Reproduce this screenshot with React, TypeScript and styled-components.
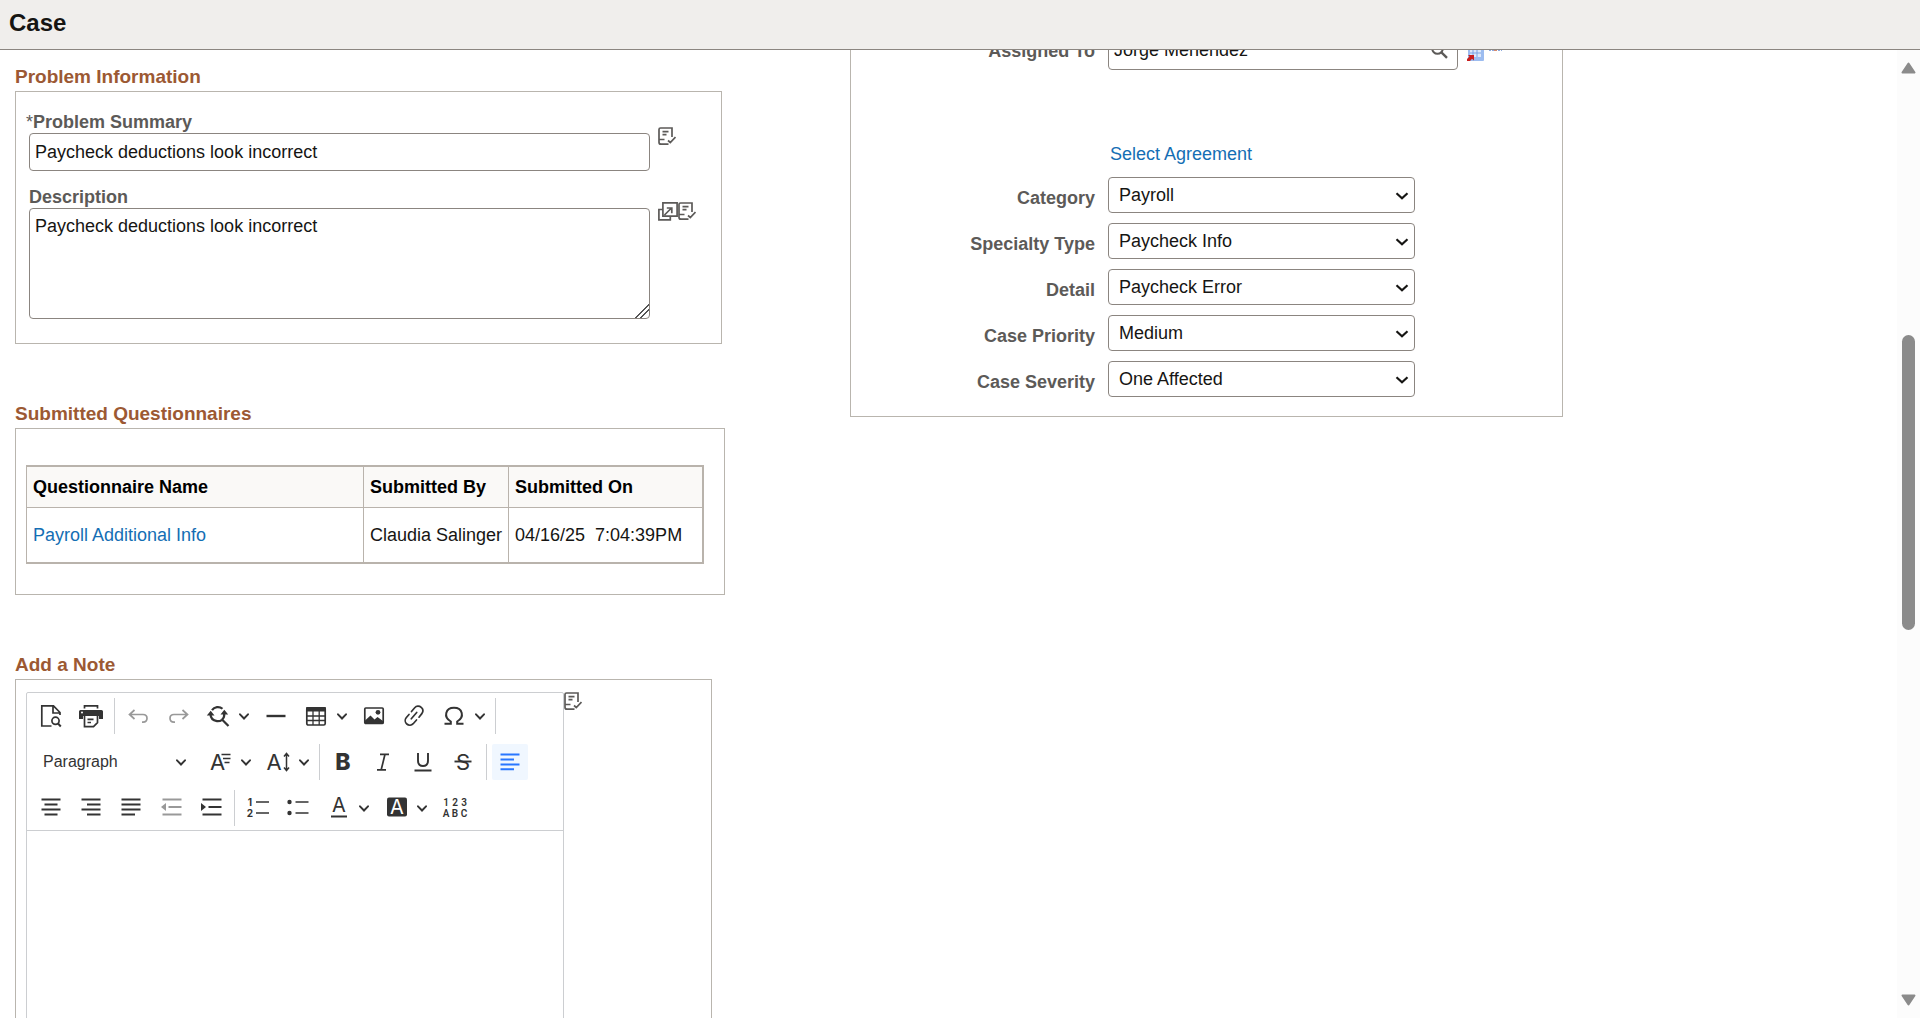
import React from 'react';
import styled, { createGlobalStyle } from 'styled-components';

const GlobalStyle = createGlobalStyle`
  *, *::before, *::after { box-sizing: border-box; }
  body {
    margin: 0;
    background: #fff;
    color: #161513;
    font: 18px/20px "Liberation Sans", Arial, sans-serif;
  }
  input, select, textarea, button { font: inherit; color: inherit; }
  button { cursor: pointer; }
`;

const Page = styled.div`
  display: flex;
  flex-direction: column;
  height: 100vh;
`;

const Header = styled.header`
  flex: none;
  padding: 9px 9px 12px;
  background: #f0eeec;
  border-bottom: 1px solid #8b8580;
`;

const PageTitle = styled.h1`
  margin: 0;
  font-size: 24px;
  line-height: 28px;
`;

const Body = styled.div`
  display: flex;
  flex: 1;
  min-height: 0;
`;

const Main = styled.main`
  display: grid;
  grid-template-columns: minmax(0, 850fr) minmax(0, 1047fr);
  align-items: start;
  flex: 1;
  min-width: 0;
  overflow: hidden;
`;

const LeftColumn = styled.div`
  display: flex;
  flex-direction: column;
  gap: 59px;
  padding: 16px 0 0 15px;
`;

const SectionTitle = styled.h2`
  margin: 0 0 3px;
  color: #9c5933;
  font-size: 19px;
  line-height: 22px;
`;

const Panel = styled.div<{ $width: number; $padding: string }>`
  max-width: ${(p) => p.$width}px;
  padding: ${(p) => p.$padding};
  border: 1px solid #b9b5ae;
`;

const FieldLine = styled.div`
  display: flex;
  gap: 8px;
  & + & { margin-top: 16px; }
`;

const Field = styled.div`
  flex: 1;
  max-width: 621px;
`;

const FieldLabel = styled.label`
  display: block;
  color: #5c5a58;
  font-weight: 700;
  line-height: 21px;
`;

const Required = styled.span`
  margin-left: -3px;
  font-weight: 400;
`;

const FieldIcons = styled.div`
  display: flex;
  align-items: flex-start;
  padding-top: 15px;
`;

const IconButton = styled.button`
  display: block;
  padding: 0;
  border: 0;
  background: none;
  color: #5c5a58;
  svg { display: block; }
`;

const TextBox = styled.input`
  display: block;
  width: 100%;
  height: 38px;
  padding: 0 5px;
  border: 1px solid #8b8580;
  border-radius: 4px;
  background: #fff;
`;

const TextArea = styled.textarea`
  display: block;
  width: 100%;
  height: 111px;
  padding: 7px 5px;
  border: 1px solid #8b8580;
  border-radius: 4px;
  background: #fff;
  &::-webkit-resizer {
    background: linear-gradient(
      135deg,
      transparent 51%, #555 51% 57%, transparent 57% 69%, #555 69% 75%, transparent 75%
    );
  }
`;

const TextLink = styled.a`
  color: #146eb4;
  text-decoration: none;
`;

const Table = styled.table`
  width: 100%;
  max-width: 678px;
  border: 2px solid #b9b3ac;
  border-left-width: 1px;
  border-spacing: 0;
  table-layout: fixed;
`;

const HeadCell = styled.th<{ $width?: number }>`
  width: ${(p) => (p.$width ? `${p.$width}px` : 'auto')};
  height: 41px;
  padding: 0 6px;
  border-bottom: 1px solid #b9b3ac;
  background: #faf9f7;
  color: #000;
  text-align: left;
  & + & { border-left: 1px solid #b9b3ac; }
`;

const Cell = styled.td`
  height: 54px;
  padding: 0 6px;
  white-space: pre;
  & + & { border-left: 1px solid #b9b3ac; }
`;

const EditorLine = styled.div`
  display: flex;
  align-items: flex-start;
`;

const Editor = styled.div`
  flex: 1;
  max-width: 538px;
  border: 1px solid #ccced1;
  border-radius: 2px;
`;

const Toolbar = styled.div`
  display: flex;
  flex-direction: column;
  gap: 10px;
  padding: 5px 6px 4px;
  border-bottom: 1px solid #ccced1;
`;

const ToolRow = styled.div`
  display: flex;
  gap: 4px;
`;

const Tool = styled.button<{ $active?: boolean; $split?: boolean }>`
  display: flex;
  align-items: center;
  width: ${(p) => (p.$split ? 54 : 36)}px;
  height: 36px;
  padding: 0 6px;
  border: 0;
  border-radius: 2px;
  background: ${(p) => (p.$active ? '#f0f7ff' : 'transparent')};
  color: ${(p) => (p.$active ? '#2977ff' : '#333')};
  gap: 9px;
  &:disabled { color: #999; cursor: default; }
  svg { flex: none; }
`;

const ParagraphTool = styled.button`
  display: flex;
  align-items: center;
  justify-content: space-between;
  width: 165px;
  height: 36px;
  padding: 0 12px 0 10px;
  border: 0;
  background: none;
  color: #333;
  font-size: 16px;
`;

const Separator = styled.span`
  width: 1px;
  height: 36px;
  margin: 0 1px;
  background: #ccced1;
`;

const EditorBody = styled.textarea`
  display: block;
  width: 100%;
  height: 320px;
  padding: 12px;
  border: 0;
  outline: 0;
  resize: none;
  background: #fff;
`;

const AssignPanel = styled.div`
  display: grid;
  gap: 10px;
  max-width: 713px;
  margin-top: -30px;
  padding: 11px 0 19px;
  border: 1px solid #b9b5ae;
`;

const AssignRow = styled.div`
  display: grid;
  grid-template-columns: 244px minmax(0, 1fr);
  column-gap: 13px;
  align-items: center;
`;

const AssignLabel = styled.label<{ $drop?: boolean }>`
  padding-top: ${(p) => (p.$drop ? 6 : 0)}px;
  color: #5c5a58;
  font-weight: 700;
  text-align: right;
`;

const LookupLine = styled.div`
  display: flex;
  align-items: center;
  gap: 9px;
`;

const Lookup = styled.div`
  display: flex;
  align-items: center;
  width: 350px;
  height: 38px;
  padding: 0 9px 2px 5px;
  border: 1px solid #8b8580;
  border-radius: 4px;
`;

const LookupInput = styled.input`
  flex: 1;
  min-width: 0;
  padding: 0;
  border: 0;
  outline: 0;
  background: none;
`;

const AssignIcons = styled.div`
  display: flex;
  align-items: center;
  gap: 4px;
`;

const AgreementLine = styled.div`
  padding: 64px 0 3px 259px;
`;

const SelectBox = styled.div`
  position: relative;
  max-width: 307px;
  svg {
    position: absolute;
    top: 13px;
    right: 6px;
    pointer-events: none;
  }
`;

const Select = styled.select`
  display: block;
  width: 100%;
  height: 36px;
  padding: 0 24px 0 10px;
  border: 1px solid #8b8580;
  border-radius: 4px;
  background: #fff;
  appearance: none;
`;

const ScrollTrack = styled.div`
  display: flex;
  flex-direction: column;
  align-items: center;
  width: 23px;
  padding: 12px 0;
  background: #fcfcfc;
  color: #8b8b8b;
`;

const ScrollSpace = styled.div<{ $grow: number }>`
  flex: ${(p) => p.$grow} 0 0;
`;

const ScrollThumb = styled.div`
  flex: 295 0 0;
  width: 13px;
  border-radius: 7px;
  background: #8b8b8b;
`;

/* Icons */

const NoteCheck = () => (
  <svg width="18" height="19" viewBox="0 0 18 19" fill="none" stroke="currentColor" strokeWidth="1.7">
    <path d="M1 12.500V2.500Q1 1 2.500 1H14v9M1 12.500H6.500M1 12.500v2.700q0 2 2 2H10.500M4.500 4.600h6M4.500 7.600h4M10 13.500l2.300 2L17.500 10" />
  </svg>
);

const PopOut = () => (
  <svg width="20" height="19" viewBox="0 0 20 19" fill="none" stroke="currentColor" strokeWidth="1.7">
    <path d="M4.500 7.500H.9v10.400h11.400V14.500M4.900.9h14.200v13.200H4.900zM6.500 13L13.500 6M8.800 6h5v5.200" />
  </svg>
);

const Magnifier = () => (
  <svg width="17" height="17" viewBox="0 0 17 17" fill="none" stroke="currentColor" strokeWidth="2">
    <circle cx="6.500" cy="6.500" r="5.300" />
    <path d="M10.400 10.400L16 15.800" strokeWidth="2.400" />
  </svg>
);

const GridArrow = () => (
  <svg width="17" height="20" viewBox="0 0 17 20">
    <rect x="1" y="1" width="16" height="19" rx="1" fill="#9cbcf0" />
    <rect x="3" y="2" width="11" height="14" fill="#dbe8fb" />
    <path d="M3 5h11M3 8.500h11M3 12h11M6 2v14M10 2v14" stroke="#7ba3e4" />
    <path d="M0 20v-2l2.500-2.500L1 14h6v5.500L5 17.800 3 20z" fill="#c81e1e" />
  </svg>
);

const PeopleStrip = () => (
  <svg width="15" height="20" viewBox="0 0 15 20">
    <circle cx="4" cy="2.500" r="2" fill="#dba273" />
    <circle cx="11" cy="2.500" r="2" fill="#dba273" />
    <path d="M1 8.500V5.500h6v3M8 8.500V5.500h6v3" fill="#a9c3ee" />
    <path d="M1 9.500h13" stroke="#8fabdf" strokeDasharray="2 1" />
    <path d="M6 9.500h3" stroke="#d58a70" />
  </svg>
);

const Chevron = () => (
  <svg width="10" height="10" viewBox="0 0 10 10" fill="none" stroke="currentColor" strokeWidth="1.900" strokeLinecap="round">
    <path d="M1 3.300L5 7.500 9 3.300" />
  </svg>
);

const SelectArrow = () => (
  <svg width="14" height="12" viewBox="0 0 14 12" fill="none" stroke="currentColor" strokeWidth="2.200">
    <path d="M1.500 3.300L7 8.300l5.500-5" />
  </svg>
);

const GlyphBox = styled.svg`
  overflow: visible;
`;

const Glyph = ({ children }: { children: React.ReactNode }) => (
  <GlyphBox width="24" height="24" viewBox="0 0 24 24" fill="none" stroke="currentColor" strokeWidth="1.7">
    {children}
  </GlyphBox>
);

const Letter = ({
  x = 12, y, size, weight = 400, family = 'Inter, sans-serif', fill = 'currentColor', children,
}: {
  x?: number; y: number; size: number; weight?: number; family?: string; fill?: string; children: string;
}) => (
  <text
    x={x}
    y={y}
    fill={fill}
    stroke="none"
    textAnchor="middle"
    fontFamily={family}
    fontSize={size}
    fontWeight={weight}
  >
    {children}
  </text>
);

const icons: Record<string, React.ReactNode> = {
  preview: (
    <Glyph>
      <path d="M12.500 22H2.800V1.900H14.500L21 8.500v2.500M14 2v7h7" />
      <circle cx="16.500" cy="16.800" r="3.600" />
      <path d="M19 19.500l2.800 3" strokeWidth="2" />
    </Glyph>
  ),
  print: (
    <Glyph>
      <path d="M5.500 4.500V1.800h13v2.700" />
      <path fill="currentColor" stroke="none" d="M1.500 6h21q1.500 0 1.500 1.500V15h-4v-3H4v3H0V7.500Q0 6 1.500 6z" />
      <circle cx="3" cy="8.500" r="1" fill="#fff" stroke="none" />
      <path d="M5.500 12v10.700h9l4-4V12M8.500 15.300h6M8.500 18.500h3.500" />
    </Glyph>
  ),
  undo: (
    <Glyph>
      <path d="M8.500 6L3.500 10.500 8.500 15M3.500 10.500H17q4 0 4 3.800T17 18.200h-1" />
    </Glyph>
  ),
  redo: (
    <Glyph>
      <path d="M16.500 6L21.500 10.500 16.500 15M21.500 10.500H8q-4 0-4 3.800T8 18.200h1" />
    </Glyph>
  ),
  find: (
    <Glyph>
      <path strokeWidth="2.200" d="M6 6.200A7 7 0 0 1 16.500 4.800M4.500 10q0 6 6.500 7.200 3 .2 5-1.400 2.600-2.600 2.200-6M16 15.500l6.500 6.500" />
      <path fill="currentColor" stroke="none" d="M.800 11.500h7.700L4.700 6.800zM14.500 10.500h7.700L18.300 5.800z" />
    </Glyph>
  ),
  rule: (
    <Glyph>
      <path d="M2.500 12h19" strokeWidth="2.400" />
    </Glyph>
  ),
  table: (
    <Glyph>
      <rect x="2.800" y="3.800" width="18.400" height="17.200" rx="1.500" />
      <path fill="currentColor" stroke="none" d="M2 4q0-1 1-1h18q1 0 1 1v3.500H2z" />
      <path strokeWidth="1.300" d="M3 12h18M3 16.500h18M9 7v14M15.200 7v14" />
    </Glyph>
  ),
  image: (
    <Glyph>
      <rect x="2.800" y="4" width="18.400" height="15.500" rx="1" />
      <circle cx="16" cy="8.300" r="2.400" fill="currentColor" stroke="none" />
      <path fill="currentColor" stroke="none" d="M3 20v-3.500l5.500-5 4 4 3-2.500 5.500 4V20z" />
    </Glyph>
  ),
  link: (
    <Glyph>
      <path strokeLinecap="round" d="M9.500 7.500l3.200-3.800a4.600 4.600 0 0 1 6.500-.3 4.600 4.600 0 0 1 .8 6L17 13.200M7 10.500l-2.800 3.200a4.600 4.600 0 0 0 .6 6.300 4.600 4.600 0 0 0 6.400-.3L14.500 16M9.300 14.800l5.400-6.300" />
    </Glyph>
  ),
  omega: (
    <Glyph>
      <path strokeWidth="2" d="M2.500 19.700h6.300v-2.200C1 13 3.500 3.800 12 3.800S23 13 15.200 17.500v2.200h6.300" />
    </Glyph>
  ),
  size: (
    <Glyph>
      <Letter x={9.5} y={20} size={22}>A</Letter>
      <path strokeWidth="1.500" d="M13.500 4.500h9M15 8.500h7.500M16.500 12.500h5" />
    </Glyph>
  ),
  height: (
    <Glyph>
      <Letter x={8} y={20} size={22}>A</Letter>
      <path strokeWidth="1.500" d="M20.500 4v16M18 6.500l2.500-3 2.500 3M18 17.500l2.500 3 2.500-3" />
    </Glyph>
  ),
  bold: <Glyph><Letter y={20} size={23} weight={800}>B</Letter></Glyph>,
  italic: (
    <Glyph>
      <path d="M9 4.300h9M6 19.800h9M14 4.300L10.200 19.800" />
    </Glyph>
  ),
  underline: (
    <Glyph>
      <path strokeWidth="1.900" d="M7 3v7.500q0 5.500 5 5.500t5-5.500V3M3.500 20.500h17" />
    </Glyph>
  ),
  strike: (
    <Glyph>
      <Letter y={20} size={22}>S</Letter>
      <path strokeWidth="1.900" d="M3.500 11.500h17" />
    </Glyph>
  ),
  left: <Glyph><path strokeWidth="2" d="M2.500 4.500h19M2.500 9.500h13.500M2.500 14.500h19M2.500 19.200h13.500" /></Glyph>,
  center: <Glyph><path strokeWidth="2" d="M2.500 3.500h19M5.500 8.500h13M2.500 13.500h19M5.500 18.500h13" /></Glyph>,
  right: <Glyph><path strokeWidth="2" d="M2.500 3.500h19M8 8.500h13.500M2.500 13.500h19M8 18.500h13.500" /></Glyph>,
  justify: <Glyph><path strokeWidth="2" d="M2.500 3.500h19M2.500 8.500h19M2.500 13.500h19M2.500 18.500h13.500" /></Glyph>,
  outdent: (
    <Glyph>
      <path strokeWidth="2" d="M3.500 3.500h19M9.500 11h13M3.500 18.500h19" />
      <path fill="currentColor" stroke="none" d="M2 11l5-4v8z" />
    </Glyph>
  ),
  indent: (
    <Glyph>
      <path strokeWidth="2" d="M3.500 3.500h19M9.500 11h13M3.500 18.500h19" />
      <path fill="currentColor" stroke="none" d="M7 11L2 7v8z" />
    </Glyph>
  ),
  numbered: (
    <Glyph>
      <Letter x={4} y={9.5} size={10} weight={700}>1</Letter>
      <Letter x={4} y={21} size={10} weight={700}>2</Letter>
      <path d="M10 6h13M10 17h13" />
    </Glyph>
  ),
  bulleted: (
    <Glyph>
      <circle cx="3.500" cy="6" r="2.200" fill="currentColor" stroke="none" />
      <circle cx="3.500" cy="17" r="2.200" fill="currentColor" stroke="none" />
      <path d="M9.500 6h13M9.500 17h13" />
    </Glyph>
  ),
  color: (
    <Glyph>
      <Letter x={13} y={16} size={20}>A</Letter>
      <path strokeWidth="2" d="M5 20.500h16" />
    </Glyph>
  ),
  highlight: (
    <Glyph>
      <rect x="3" y="1.500" width="20" height="19" rx="2" fill="currentColor" stroke="none" />
      <Letter x={13} y={18} size={20} fill="#fff">A</Letter>
    </Glyph>
  ),
  transform: (
    <Glyph>
      <Letter x={4} y={9.500} size={10} weight={600} family="Roboto, sans-serif">1</Letter>
      <Letter x={13} y={9.500} size={10} weight={600} family="Roboto, sans-serif">2</Letter>
      <Letter x={22} y={9.500} size={10} weight={600} family="Roboto, sans-serif">3</Letter>
      <Letter x={4} y={20.500} size={10} weight={600} family="Roboto, sans-serif">A</Letter>
      <Letter x={13} y={20.500} size={10} weight={600} family="Roboto, sans-serif">B</Letter>
      <Letter x={22} y={20.500} size={10} weight={600} family="Roboto, sans-serif">C</Letter>
    </Glyph>
  ),
};

type ToolSpec = { icon: string; label: string; split?: boolean; active?: boolean; disabled?: boolean } | '|';

const row1: ToolSpec[] = [
  { icon: 'preview', label: 'Preview' },
  { icon: 'print', label: 'Print' },
  '|',
  { icon: 'undo', label: 'Undo', disabled: true },
  { icon: 'redo', label: 'Redo', disabled: true },
  { icon: 'find', label: 'Find and replace', split: true },
  { icon: 'rule', label: 'Horizontal line' },
  { icon: 'table', label: 'Insert table', split: true },
  { icon: 'image', label: 'Insert image' },
  { icon: 'link', label: 'Link' },
  { icon: 'omega', label: 'Special characters', split: true },
  '|',
];

const row2: ToolSpec[] = [
  { icon: 'size', label: 'Font family', split: true },
  { icon: 'height', label: 'Font size', split: true },
  '|',
  { icon: 'bold', label: 'Bold' },
  { icon: 'italic', label: 'Italic' },
  { icon: 'underline', label: 'Underline' },
  { icon: 'strike', label: 'Strikethrough' },
  '|',
  { icon: 'left', label: 'Align left', active: true },
];

const row3: ToolSpec[] = [
  { icon: 'center', label: 'Align center' },
  { icon: 'right', label: 'Align right' },
  { icon: 'justify', label: 'Justify' },
  { icon: 'outdent', label: 'Decrease indent', disabled: true },
  { icon: 'indent', label: 'Increase indent' },
  '|',
  { icon: 'numbered', label: 'Numbered list' },
  { icon: 'bulleted', label: 'Bulleted list' },
  { icon: 'color', label: 'Font color', split: true },
  { icon: 'highlight', label: 'Font background color', split: true },
  { icon: 'transform', label: 'List properties' },
];

const Tools = ({ items }: { items: ToolSpec[] }) => (
  <>
    {items.map((t, i) =>
      t === '|' ? (
        <Separator key={i} />
      ) : (
        <Tool key={i} type="button" aria-label={t.label} $split={t.split} $active={t.active} disabled={t.disabled}>
          {icons[t.icon]}
          {t.split && <Chevron />}
        </Tool>
      ),
    )}
  </>
);

const choices = [
  { id: 'category', label: 'Category', value: 'Payroll' },
  { id: 'specialty', label: 'Specialty Type', value: 'Paycheck Info' },
  { id: 'detail', label: 'Detail', value: 'Paycheck Error' },
  { id: 'priority', label: 'Case Priority', value: 'Medium' },
  { id: 'severity', label: 'Case Severity', value: 'One Affected' },
];

export default function App() {
  return (
    <Page>
      <GlobalStyle />
      <Header>
        <PageTitle>Case</PageTitle>
      </Header>
      <Body>
        <Main>
          <LeftColumn>
            <section>
              <SectionTitle>Problem Information</SectionTitle>
              <Panel $width={707} $padding="20px 13px 24px">
                <FieldLine>
                  <Field>
                    <FieldLabel htmlFor="summary"><Required>*</Required>Problem Summary</FieldLabel>
                    <TextBox id="summary" defaultValue="Paycheck deductions look incorrect" />
                  </Field>
                  <FieldIcons>
                    <IconButton type="button" aria-label="Check spelling of summary"><NoteCheck /></IconButton>
                  </FieldIcons>
                </FieldLine>
                <FieldLine>
                  <Field>
                    <FieldLabel htmlFor="description">Description</FieldLabel>
                    <TextArea id="description" defaultValue="Paycheck deductions look incorrect" />
                  </Field>
                  <FieldIcons>
                    <IconButton type="button" aria-label="Expand description"><PopOut /></IconButton>
                    <IconButton type="button" aria-label="Check spelling of description"><NoteCheck /></IconButton>
                  </FieldIcons>
                </FieldLine>
              </Panel>
            </section>

            <section>
              <SectionTitle>Submitted Questionnaires</SectionTitle>
              <Panel $width={710} $padding="36px 10px 30px">
                <Table>
                  <thead>
                    <tr>
                      <HeadCell $width={336}>Questionnaire Name</HeadCell>
                      <HeadCell $width={145}>Submitted By</HeadCell>
                      <HeadCell>Submitted On</HeadCell>
                    </tr>
                  </thead>
                  <tbody>
                    <tr>
                      <Cell><TextLink href="#questionnaire">Payroll Additional Info</TextLink></Cell>
                      <Cell>Claudia Salinger</Cell>
                      <Cell>{'04/16/25  7:04:39PM'}</Cell>
                    </tr>
                  </tbody>
                </Table>
              </Panel>
            </section>

            <section>
              <SectionTitle>Add a Note</SectionTitle>
              <Panel $width={697} $padding="12px 10px">
                <EditorLine>
                  <Editor>
                    <Toolbar>
                      <ToolRow><Tools items={row1} /></ToolRow>
                      <ToolRow>
                        <ParagraphTool type="button">Paragraph<Chevron /></ParagraphTool>
                        <Tools items={row2} />
                      </ToolRow>
                      <ToolRow><Tools items={row3} /></ToolRow>
                    </Toolbar>
                    <EditorBody aria-label="Note" />
                  </Editor>
                  <IconButton type="button" aria-label="Check spelling of note"><NoteCheck /></IconButton>
                </EditorLine>
              </Panel>
            </section>
          </LeftColumn>

          <AssignPanel>
            <AssignRow>
              <AssignLabel htmlFor="assigned">Assigned To</AssignLabel>
              <LookupLine>
                <Lookup>
                  <LookupInput id="assigned" defaultValue="Jorge Menendez" />
                  <IconButton type="button" aria-label="Look up assignee"><Magnifier /></IconButton>
                </Lookup>
                <AssignIcons>
                  <GridArrow />
                  <PeopleStrip />
                </AssignIcons>
              </LookupLine>
            </AssignRow>
            <AgreementLine>
              <TextLink href="#agreement">Select Agreement</TextLink>
            </AgreementLine>
            {choices.map((c) => (
              <AssignRow key={c.id}>
                <AssignLabel htmlFor={c.id} $drop>{c.label}</AssignLabel>
                <SelectBox>
                  <Select id={c.id} defaultValue={c.value}>
                    <option>{c.value}</option>
                  </Select>
                  <SelectArrow />
                </SelectBox>
              </AssignRow>
            ))}
          </AssignPanel>
        </Main>

        <ScrollTrack aria-hidden="true">
          <svg width="15" height="12" viewBox="0 0 15 12" fill="currentColor" stroke="currentColor" strokeWidth="2" strokeLinejoin="round">
            <path d="M7.500 1.500L13.500 10.500H1.500z" />
          </svg>
          <ScrollSpace $grow={261} />
          <ScrollThumb />
          <ScrollSpace $grow={364} />
          <svg width="15" height="12" viewBox="0 0 15 12" fill="currentColor" stroke="currentColor" strokeWidth="2" strokeLinejoin="round">
            <path d="M7.500 10.500L13.500 1.500H1.500z" />
          </svg>
        </ScrollTrack>
      </Body>
    </Page>
  );
}
